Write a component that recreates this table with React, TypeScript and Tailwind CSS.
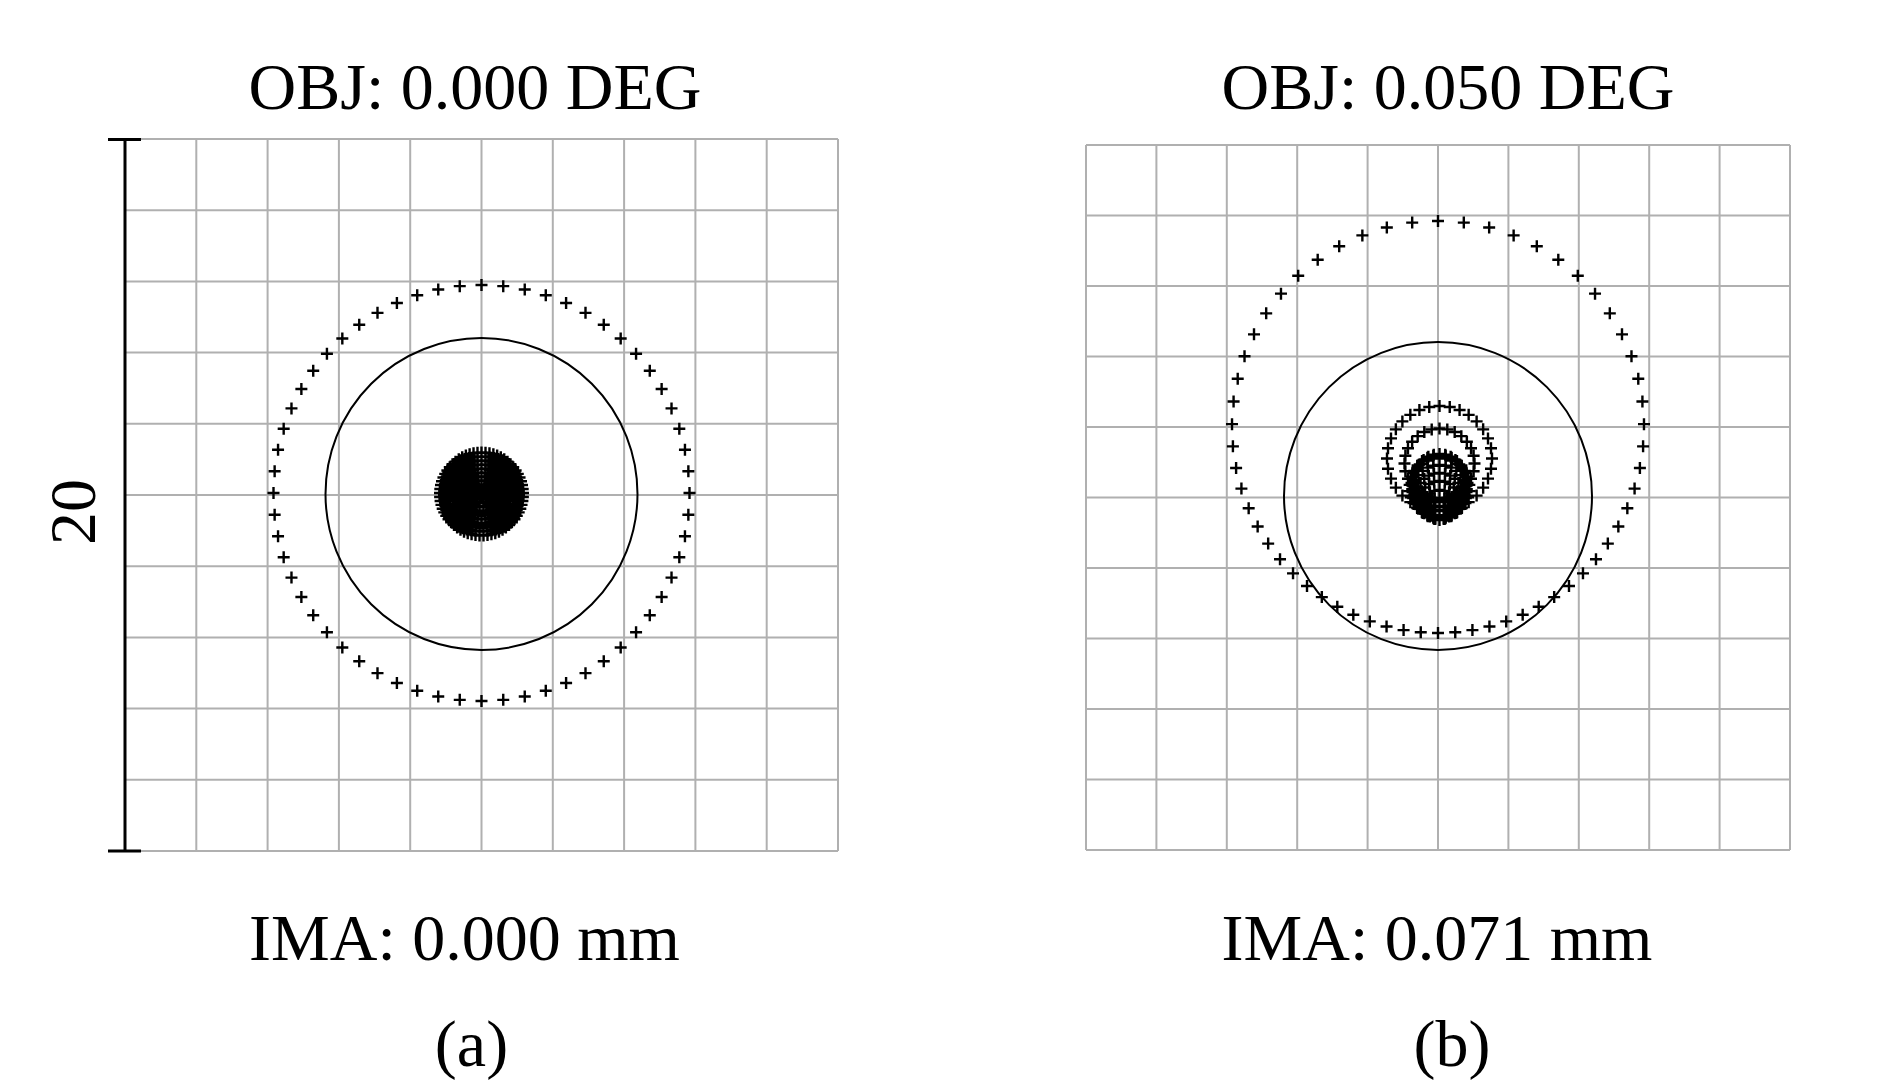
import React from "react"

type Pt = [number, number]

const ARM = 6

function crossPath(pts: Pt[]) {
  return pts
    .map(([x, y]) => {
      const a = x.toFixed(2)
      const b = y.toFixed(2)
      return `M${(x - ARM).toFixed(2)} ${b}H${(x + ARM).toFixed(2)}M${a} ${(y - ARM).toFixed(2)}V${(y + ARM).toFixed(2)}`
    })
    .join("")
}

// points on a circle, k=0 at the top
function ring(cx: number, cy: number, r: number, n: number): Pt[] {
  const pts: Pt[] = []
  for (let k = 0; k < n; k++) {
    const t = (2 * Math.PI * k) / n
    pts.push([cx + r * Math.sin(t), cy - r * Math.cos(t)])
  }
  return pts
}

// ring with crosses bunched toward the bottom (off-axis field)
function skewRing(cx: number, cy: number, r: number, n: number, a: number): Pt[] {
  const pts: Pt[] = []
  for (let k = 0; k < n; k++) {
    const t = (2 * Math.PI * k) / n
    const th = t - a * Math.sin(t)
    pts.push([cx + r * Math.sin(th), cy + r * Math.cos(th)])
  }
  return pts
}

function gridLines(x0: number, y0: number, x1: number, y1: number) {
  const v: number[] = []
  const h: number[] = []
  for (let i = 0; i <= 10; i++) {
    v.push(x0 + ((x1 - x0) * i) / 10)
    h.push(y0 + ((y1 - y0) * i) / 10)
  }
  return (
    <g stroke="#b0b0b0" strokeWidth={2}>
      {v.map((x) => (
        <line key={"v" + x} x1={x} y1={y0} x2={x} y2={y1} />
      ))}
      {h.map((y) => (
        <line key={"h" + y} x1={x0} y1={y} x2={x1} y2={y} />
      ))}
    </g>
  )
}

// on-axis spot: dense disc of crosses
const blobPts: Pt[] = [[481.5, 494]]
for (const r of [41.5, 37.5, 33.5, 29.5, 25.5, 21.5, 17.5, 13.5, 9.5, 5.5, 2.5]) {
  blobPts.push(...ring(481.5, 494, r, Math.max(6, Math.round((2 * Math.PI * r) / 4))))
}

// off-axis spot: comatic rings [centre y, radius, count]
const COMA: [number, number, number][] = [
  [458.5, 52.5, 32],
  [463.5, 35, 28],
  [478, 24, 26],
  [483, 28, 28],
  [488, 30, 30],
  [492, 27, 28],
  [496, 23, 26],
  [500, 19, 22],
  [505, 15, 18],
  [509, 11, 14],
  [513, 7, 10],
]
const comaPts: Pt[] = []
for (const [cy, r, n] of COMA) comaPts.push(...ring(1439.5, cy, r, n))

function LeftPlot() {
  return (
    <svg width={736} height={716} viewBox="106 137 736 716" className="block">
      {gridLines(125, 139, 838, 851)}
      <g stroke="#000" fill="none">
        <line x1={125} y1={139} x2={125} y2={851} strokeWidth={3} />
        <line x1={108} y1={139.5} x2={141} y2={139.5} strokeWidth={3} />
        <line x1={108} y1={851} x2={141} y2={851} strokeWidth={3} />
        <circle cx={481.5} cy={494} r={156} strokeWidth={2} />
        <path d={crossPath(ring(481.5, 493, 208, 60))} strokeWidth={2.4} />
        <path d={crossPath(blobPts)} strokeWidth={2.4} />
      </g>
    </svg>
  )
}

function RightPlot() {
  return (
    <svg width={710} height={711} viewBox="1083 142 710 711" className="block">
      {gridLines(1086, 145, 1790, 850)}
      <g stroke="#000" fill="none">
        <circle cx={1438} cy={496} r={154} strokeWidth={2} />
        <path d={crossPath(skewRing(1438, 427, 206, 60, 0.2))} strokeWidth={2.4} />
        <path d={crossPath(comaPts)} strokeWidth={2.4} />
      </g>
    </svg>
  )
}

export default function App() {
  return (
    <div className="flex w-[1890px] h-[1087px] bg-white text-black font-['Liberation_Serif','Times_New_Roman',serif] text-[66px] leading-none">
      {/* (a) on-axis */}
      <div className="flex flex-col w-[950px] pt-[54px]">
        <div className="h-[66px] text-center whitespace-nowrap">OBJ: 0.000 DEG</div>
        <div className="flex mt-[17px] pl-[40px]">
          <div className="w-[66px] h-[66px] mt-[342px] flex items-center justify-center">
            <span className="-rotate-90 whitespace-nowrap">20</span>
          </div>
          <LeftPlot />
        </div>
        <div className="h-[66px] mt-[52px] pr-[21px] text-center whitespace-nowrap">IMA: 0.000 mm</div>
        <div className="h-[66px] mt-[40px] pr-[7px] text-center">(a)</div>
      </div>

      {/* (b) off-axis */}
      <div className="flex flex-col w-[940px] pt-[54px]">
        <div className="h-[66px] pl-[56px] text-center whitespace-nowrap">OBJ: 0.050 DEG</div>
        <div className="mt-[22px] ml-[133px] self-start">
          <RightPlot />
        </div>
        <div className="h-[66px] mt-[52px] pl-[34px] text-center whitespace-nowrap">IMA: 0.071 mm</div>
        <div className="h-[66px] mt-[40px] pl-[64px] text-center">(b)</div>
      </div>
    </div>
  )
}
